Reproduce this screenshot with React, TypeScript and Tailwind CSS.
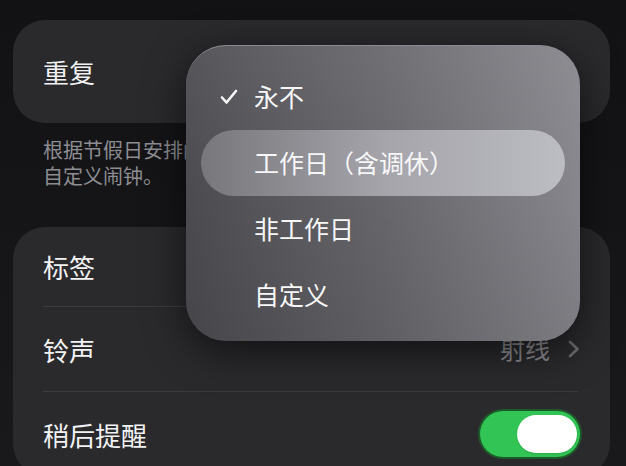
const font = { fontFamily: '"Noto Sans CJK SC", "Noto Sans", sans-serif' };

const Row = ({
  label,
  children,
  height,
  divider = true,
}: {
  label: string;
  children?: React.ReactNode;
  height: string;
  divider?: boolean;
}) => (
  <div className="relative">
    <div className={`flex items-center justify-between pl-[30px] pr-[30px] ${height}`}>
      <span className="text-[26px] text-[#f2f2f4]">{label}</span>
      {children}
    </div>
    {divider && <div className="ml-[30px] mr-[32px] h-px bg-[#3c3c40]" />}
  </div>
);

const MenuItem = ({
  label,
  checked,
  active,
}: {
  label: string;
  checked?: boolean;
  active?: boolean;
}) => (
  <div
    className={`relative flex h-[66px] items-center pl-[53px] rounded-full ${
      active ? 'bg-gradient-to-r from-[#77777c] via-[#a4a4aa] to-[#bcbcc3]' : ''
    }`}
  >
    {checked && (
      <svg
        width="18"
        height="16"
        viewBox="0 0 18 16"
        className="absolute left-[19px] top-[25px]"
        fill="none"
      >
        <path
          d="M2 8.5l4.5 5L16 2"
          stroke="#f7f7f8"
          strokeWidth="2.6"
          strokeLinecap="round"
          strokeLinejoin="round"
        />
      </svg>
    )}
    <span className="text-[25px] text-[#f7f7f8]">{label}</span>
  </div>
);

const App = (): React.ReactElement => {
  return (
    <div
      className="relative h-[466px] w-[626px] overflow-hidden bg-gradient-to-b from-[#121215] to-[#19191c] px-[13px] pt-[20px]"
      style={font}
    >
      <div className="mr-[3px] flex h-[103px] items-center rounded-[32px] bg-[#2a2a2d] pl-[30px]">
        <span className="text-[26px] text-[#f2f2f4]">重复</span>
      </div>

      <p className="mt-[14px] mb-[38px] pl-[30px] text-[20px] leading-[26px] text-[#8d8d92]">
        根据节假日安排闹钟响铃，也可以选择
        <br />
        自定义闹钟。
      </p>

      <div className="mr-[3px] rounded-[32px] bg-[#2a2a2d]">
        <Row label="标签" height="h-[79px]" />
        <Row label="铃声" height="h-[84px]">
          <div className="flex items-center gap-[18px]">
            <span className="text-[25px] text-[#8d8d92]">射线</span>
            <svg width="12" height="18" viewBox="0 0 12 18" fill="none">
              <path
                d="M2 2l7.5 7L2 16"
                stroke="#6d6d72"
                strokeWidth="2.6"
                strokeLinecap="round"
                strokeLinejoin="round"
              />
            </svg>
          </div>
        </Row>
        <Row label="稍后提醒" height="h-[84px]" divider={false}>
          <div className="flex h-[46px] w-[100px] items-center justify-end rounded-full bg-[#32c555] pr-[3px] ring-2 ring-[#1d5a2a]">
            <div className="h-[38px] w-[60px] rounded-full bg-white shadow" />
          </div>
        </Row>
      </div>

      <div className="absolute left-[186px] top-[45px] h-[296px] w-[394px] overflow-hidden rounded-[40px] border-t border-[#8a8a90] bg-gradient-to-r from-[#4b4b50] via-[#66666b] to-[#86868c] px-[15px] pt-[18px] shadow-[0_10px_40px_rgba(0,0,0,0.6)]">
        <div className="absolute inset-0 bg-gradient-to-b from-[#ffffff10] via-transparent to-[#00000014]" />
        <div className="relative">
          <MenuItem label="永不" checked />
          <MenuItem label="工作日（含调休）" active />
          <MenuItem label="非工作日" />
          <MenuItem label="自定义" />
        </div>
      </div>
    </div>
  );
};

export default App;
